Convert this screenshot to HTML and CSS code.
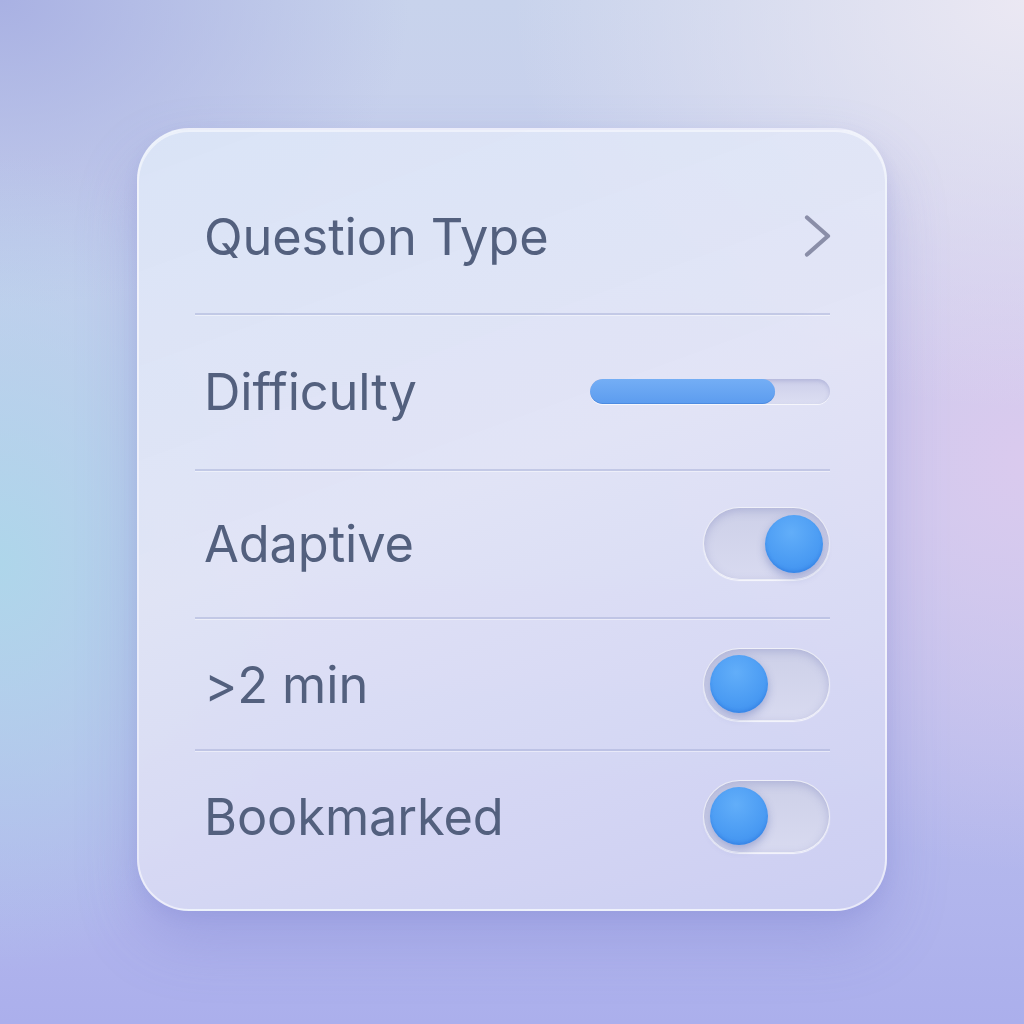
FILE: index.html
```html
<!DOCTYPE html>
<html lang="en">
<head>
<meta charset="utf-8">
<title>Filters</title>
<link rel="stylesheet" href="styles.css">
</head>
<body>
<main class="stage">
  <section class="card">
    <div class="row row-1">
      <span class="label">Question Type</span>
      <svg class="chevron" width="30" height="44" viewBox="0 0 30 44"><path d="M4 3.5 L25 22 L4 40.5" fill="none" stroke="#8a8ea8" stroke-width="4.2" stroke-linecap="round" stroke-linejoin="round"/></svg>
    </div>
    <div class="row row-2">
      <span class="label">Difficulty</span>
      <div class="slider"><div class="slider-fill" style="width:77%"></div></div>
    </div>
    <div class="row row-3">
      <span class="label">Adaptive</span>
      <div class="toggle on"><span class="knob"></span></div>
    </div>
    <div class="row row-4">
      <span class="label">&gt;2 min</span>
      <div class="toggle"><span class="knob"></span></div>
    </div>
    <div class="row row-5 last">
      <span class="label">Bookmarked</span>
      <div class="toggle"><span class="knob"></span></div>
    </div>
  </section>
</main>
</body>
</html>
```
FILE: styles.css
```css
html, body {
  margin: 0;
  padding: 0;
  width: 1024px;
  height: 1024px;
  overflow: hidden;
}
body {
  font-family: Inter, "Noto Sans", "Liberation Sans", sans-serif;
  background:
    radial-gradient(ellipse 50% 40% at 100% 0%, #ebe8f3 0%, rgba(235,232,243,0) 100%),
    radial-gradient(ellipse 30% 40% at 0% 55%, #aed6ea 0%, rgba(174,214,234,0) 100%),
    radial-gradient(ellipse 35% 40% at 100% 45%, #dacaee 0%, rgba(218,202,238,0) 100%),
    radial-gradient(ellipse 40% 30% at 0% 0%, #a9b1e3 0%, rgba(169,177,227,0) 100%),
    linear-gradient(180deg, #c8d3ec 0%, #c4c8ee 50%, #abafec 100%);
}
.stage {
  padding: 128px 0 0 137px;
}
.card {
  box-sizing: border-box;
  width: 750px;
  height: 783px;
  border-radius: 52px;
  padding: 30px 55px 28px 56px;
  background: linear-gradient(160deg, rgba(220,230,247,0.92) 0%, rgba(228,230,246,0.9) 45%, rgba(206,208,242,0.9) 100%);
  border: 2px solid rgba(255,255,255,0.55);
  box-shadow: 0 30px 60px rgba(110,115,200,0.28), 0 6px 14px rgba(120,125,200,0.15), inset 0 2px 0 rgba(255,255,255,0.5);
  display: flex;
  flex-direction: column;
}
.row {
  display: flex;
  align-items: center;
  justify-content: space-between;
  border-bottom: 2px solid rgba(160,168,210,0.45);
  box-shadow: 0 1px 0 rgba(255,255,255,0.45);
  padding-left: 9px;
}
.row.last { border-bottom: none; box-shadow: none; }
.row-1 { height: 153px; }
.row-2 { height: 155px; }
.row-3 { height: 146px; }
.row-4 { height: 131px; }
.row-5 { height: 130px; }
.label {
  font-size: 50.5px;
  color: #53607e;
  letter-spacing: -0.1px;
}
.chevron { margin-right: -3px; }
.slider {
  width: 240px;
  height: 25px;
  border-radius: 13px;
  background: linear-gradient(180deg, #cdcfea 0%, #dcdef2 100%);
  box-shadow: inset 0 2px 4px rgba(130,135,190,0.35), 0 1px 0 rgba(255,255,255,0.7);
  overflow: hidden;
}
.slider-fill {
  height: 100%;
  border-radius: 13px;
  background: linear-gradient(180deg, #74aef5 0%, #5c9cef 100%);
  box-shadow: inset 0 -1px 0 rgba(50,110,200,0.35);
}
.toggle {
  box-sizing: border-box;
  width: 127px;
  height: 73px;
  border-radius: 37px;
  background: linear-gradient(180deg, #cdd0e8 0%, #d8daf0 100%);
  box-shadow: inset 0 3px 8px rgba(120,125,185,0.35), 0 1px 1px rgba(255,255,255,0.8);
  border: 1.5px solid rgba(255,255,255,0.6);
  display: flex;
  align-items: center;
  padding: 0 6px;
}
.toggle.on { justify-content: flex-end; }
.knob {
  width: 58px;
  height: 58px;
  border-radius: 50%;
  background: radial-gradient(circle at 45% 30%, #62aef9 0%, #4a9bf3 60%, #3a8aec 100%);
  box-shadow: 0 4px 8px rgba(60,80,160,0.35), inset 0 -2px 3px rgba(30,100,210,0.3);
}
```
